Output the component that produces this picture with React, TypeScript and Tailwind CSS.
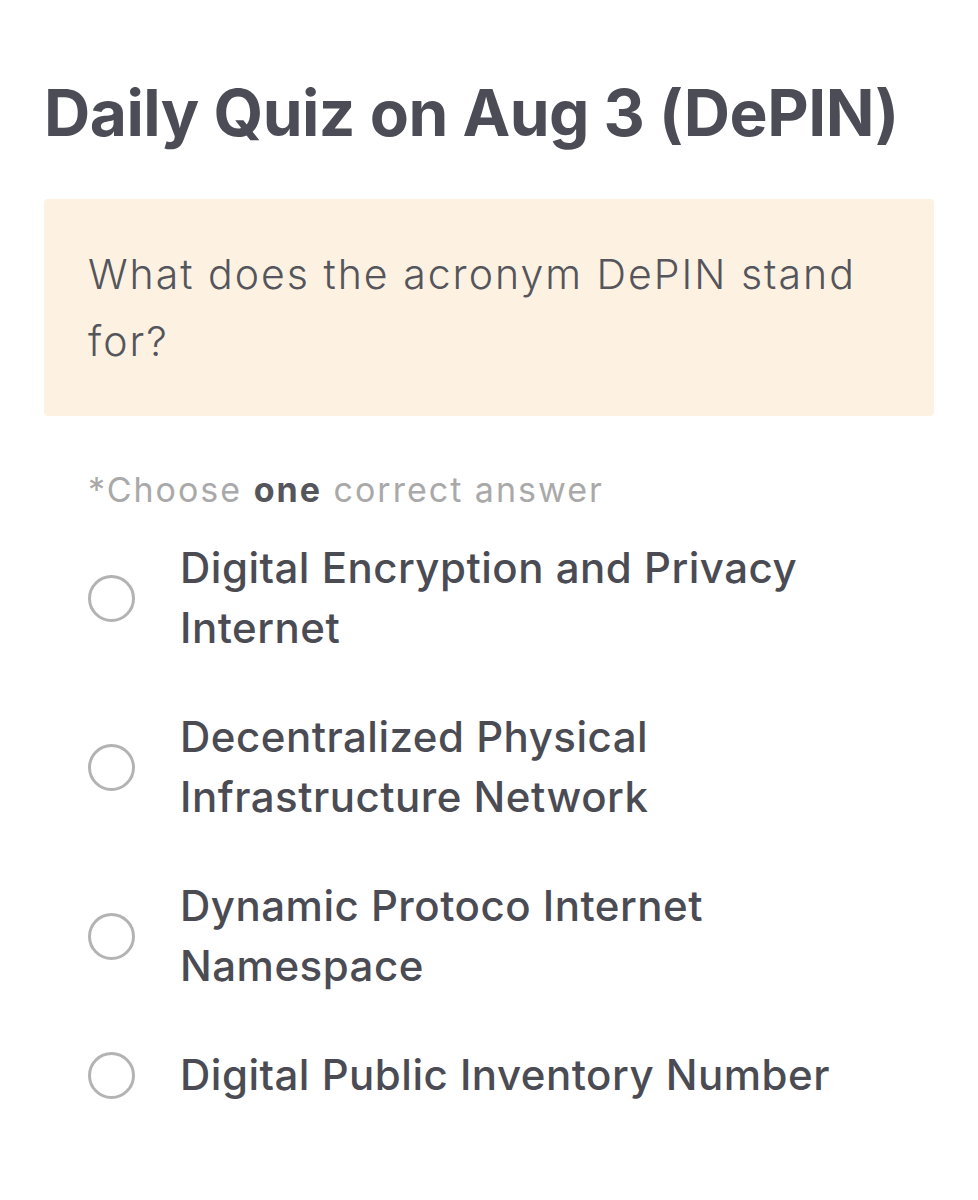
const options = [
  "Digital Encryption and Privacy Internet",
  "Decentralized Physical Infrastructure Network",
  "Dynamic Protoco Internet Namespace",
  "Digital Public Inventory Number",
]

export default function App() {
  return (
    <div className="min-h-[1200px] w-[978px] bg-white font-['Inter',sans-serif] pt-[74px]">
      <h1 className="ml-[44px] text-[64px] leading-[78px] font-bold tracking-[-0.5px] text-[#4b4c55]">
        Daily Quiz on Aug 3 (DePIN)
      </h1>
      <div className="mx-[44px] mt-[47px] h-[217px] bg-[#fdf2e2] rounded-sm px-[44px] pt-[42px]">
        <p className="text-[41px] leading-[67px] font-light tracking-[2px] text-[#55555c] w-[800px]">
          What does the acronym DePIN stand for?
        </p>
      </div>
      <p className="ml-[88px] mt-[52px] text-[34px] leading-[44px] tracking-[2px] text-[#a9a9a9]">
        *Choose <span className="font-bold text-[#55555c]">one</span> correct answer
      </p>
      <div className="ml-[88px] mt-[26px] flex flex-col gap-[49px]">
        {options.map((o) => (
          <label key={o} className="flex items-center">
            <span className="w-[47px] h-[47px] rounded-full border-[3px] border-[#b3b3b3] shrink-0" />
            <span className="ml-[45px] w-[680px] text-[42px] leading-[60px] font-medium tracking-[0.5px] text-[#4a4b53]">
              {o}
            </span>
          </label>
        ))}
      </div>
    </div>
  )
}
